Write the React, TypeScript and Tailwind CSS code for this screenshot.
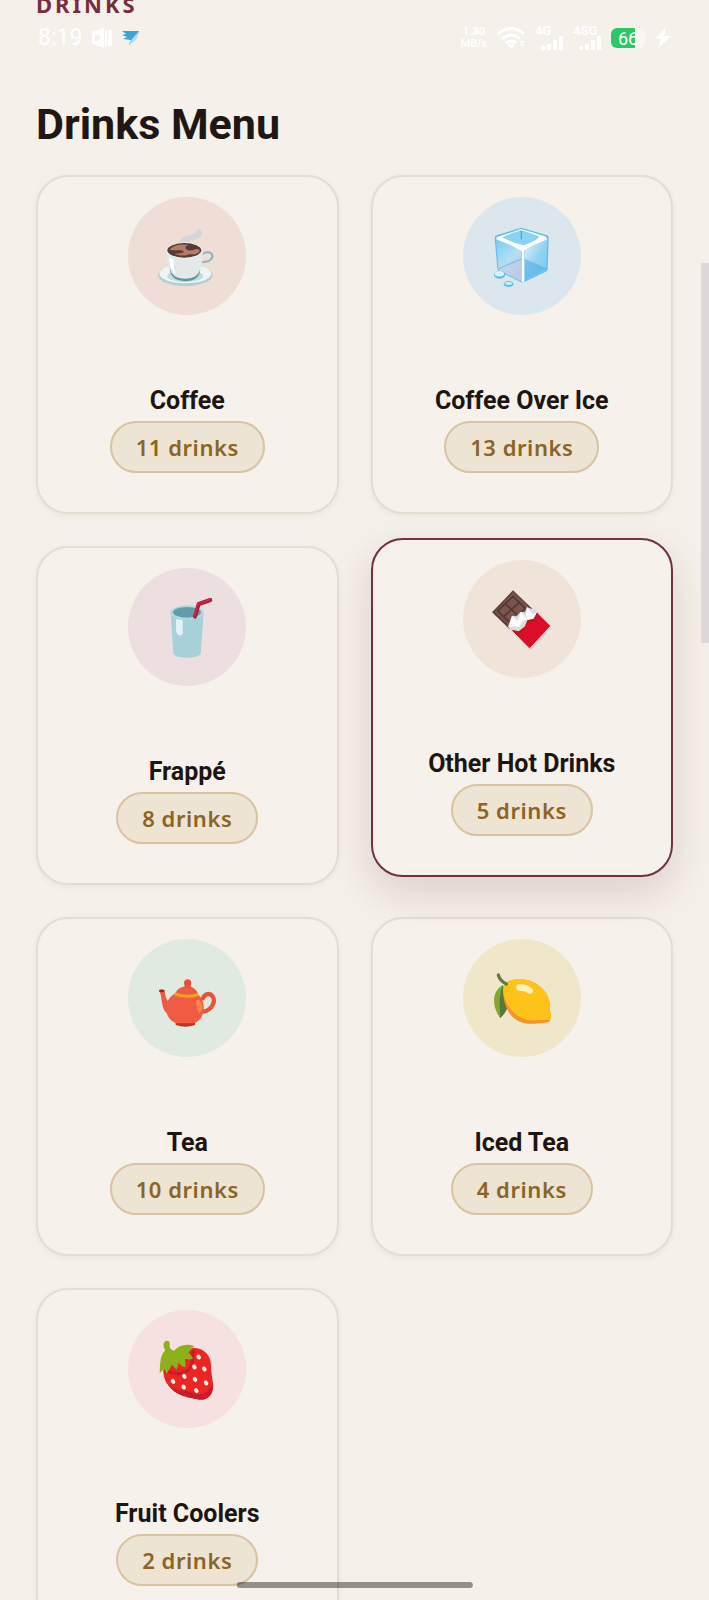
import React from "react";

const CoffeeArt = () => (
  <svg viewBox="0 0 180 180" className="size-15 overflow-visible" aria-hidden="true">
    <path d="M68 52c2-18 16-22 32-25 14-3 20-8 22-21 14 6 18 18 8 27-10 8-24 8-34 13-8 3-12 8-12 14z" fill="#ccd3d7" opacity=".75" />
    <ellipse cx="85" cy="147" rx="82" ry="33" fill="#b3ced5" />
    <ellipse cx="85" cy="143" rx="78" ry="29" fill="#eef5f5" />
    <ellipse cx="85" cy="150" rx="54" ry="18" fill="#c3dce1" />
    <path d="M134 85c14-10 32-8 32 6 0 12-16 18-34 17" fill="none" stroke="#8db4bf" strokeWidth="6" />
    <path d="M29 72c0 34 4 57 20 76 13 16 55 16 70 0 16-19 18-42 19-76z" fill="#e4e9e7" />
    <path d="M38 126c3 10 6 16 12 22 14 14 55 14 69 0 5-5 9-12 11-20-1 13-4 20-11 27-14 14-56 14-70-1-7-7-10-16-11-28z" fill="#5f9799" />
    <path d="M36 93c7 5 10 6 14 8 0 20 2 33 7 43-14-10-19-25-21-51z" fill="#fff" />
    <ellipse cx="83" cy="74" rx="55" ry="25" fill="#e9efee" />
    <ellipse cx="82" cy="73" rx="51" ry="22" fill="#573b36" />
    <path d="M38 72c10-16 38-20 58-14-14 0-13 12-2 15 14 3 20-7 30-3 7 3 4 9-3 12-11 7-20 0-29 4-12 5-27 2-40-2 10-3 28-1 28-7 0-7-20-3-42-5z" fill="#b37e65" />
  </svg>
);

const IceArt = () => (
  <svg viewBox="0 0 180 180" className="size-15 overflow-visible" aria-hidden="true">
    <defs>
      <linearGradient id="iceLeft" x1="0" y1="0" x2="0.6" y2="1">
        <stop offset="0" stopColor="#7bcdf0" />
        <stop offset=".6" stopColor="#b4dff3" />
        <stop offset="1" stopColor="#b9c9e8" />
      </linearGradient>
      <linearGradient id="iceRight" x1="0" y1="0" x2="1" y2="1">
        <stop offset="0" stopColor="#e3f5fc" />
        <stop offset=".5" stopColor="#93d3f1" />
        <stop offset="1" stopColor="#74c5eb" />
      </linearGradient>
    </defs>
    <path d="M88 5 165 28q6 2 5 9l-3 93q0 5-6 7l-66 32q-4 2-9-1L20 135q-4-2-4-8L8 36q0-6 6-8z" fill="#5dbfe6" />
    <path d="M12 38 88 72v94L22 133q-3-2-3-6z" fill="url(#iceLeft)" />
    <path d="M98 72l68-34-3 91q0 4-4 6l-61 29z" fill="url(#iceRight)" />
    <path d="m18 122 70-30v74l-66-33z" fill="#c3cbe6" opacity=".45" />
    <path d="m98 102 65 27-65 35z" fill="#5ab5e2" opacity=".7" />
    <path d="M88 9 164 32 94 69 13 34z" fill="#fff" />
    <path d="M88 13q38 11 54 19-10 13-47 26Q53 47 31 34q28-14 57-21z" fill="#8ad3f2" />
    <path d="M88 14v26" fill="none" stroke="#46aadb" strokeWidth="4" />
    <path d="M14 36q45 17 78 36 28-18 72-35M93 72v96" fill="none" stroke="#fff" strokeWidth="8" strokeLinejoin="round" />
    <path d="m21 128 67-29m10 1 64 29" stroke="#4fadd6" strokeWidth="2" />
    <ellipse cx="23" cy="146" rx="17" ry="12" fill="#64bce2" />
    <ellipse cx="22" cy="143" rx="14" ry="8" fill="#d7f2fd" />
    <ellipse cx="50" cy="174" rx="15" ry="9" fill="#64bce2" />
    <ellipse cx="50" cy="172" rx="11" ry="5" fill="#c4eafc" />
  </svg>
);

const CupArt = () => (
  <svg viewBox="0 0 180 180" className="size-15 overflow-visible" aria-hidden="true">
    <path d="M41 47 49 169c3 18 79 18 82 0l9-122z" fill="#a6d1d8" />
    <ellipse cx="90" cy="47" rx="50" ry="22" fill="#aed9df" />
    <ellipse cx="90" cy="46" rx="42" ry="16" fill="#619ca8" />
    <path d="m114 59 11-38 35-12" fill="none" stroke="#b3183a" strokeWidth="12" strokeLinecap="round" strokeLinejoin="round" />
    <path d="m112 57 10-36 37-13" fill="none" stroke="#ce2b4a" strokeWidth="4" strokeLinecap="round" strokeLinejoin="round" />
    <path d="M57 67q10-1 20 3v39q-2 10-14 4-6-3-6-13z" fill="#e2f3f7" />
  </svg>
);

const ChocolateArt = () => (
  <svg viewBox="0 0 180 180" className="size-15 overflow-visible" aria-hidden="true">
    <path d="m63 4 58 55-68 62L0 70z" fill="#5d4038" />
    <path d="m64 9 50 49-61 52L8 69z" fill="#79564b" />
    <path d="m63 22 37 36-47 42-36-34zM40 44l37 35M82 40 35 83" fill="none" stroke="#503730" strokeWidth="5" />
    <path d="m48 112 12-32 13 2 13-14 13 2 5-16 14 5 8-3 14 16 2 22-40 38-40 2z" fill="#d9dde1" />
    <path d="m60 81 17 14 10-27 14 18 4-31 16 19 14-1-18 22-22-1-14 20-17-2-14 4z" fill="#fafafa" />
    <path d="m61 124 20 3 17-14 8-19 19-4 10-19 40 40-61 66z" fill="#dc0d28" />
    <path d="m61 124 20 3 17-14-2 12-17 13zM106 94l19-4 10-19 4 4-11 22-20 5z" fill="#b71c1c" />
    <path d="m114 178 61-66 3 5-61 66z" fill="#cfd1d5" />
    <path d="m61 124 53 54" stroke="#a91424" strokeWidth="3" />
  </svg>
);

const TeapotArt = () => (
  <svg viewBox="0 0 180 180" className="size-15 overflow-visible" aria-hidden="true">
    <path d="M138 91c5-14 20-18 29-6 10 15-2 41-28 46" fill="none" stroke="#e9533c" strokeWidth="13" strokeLinecap="round" />
    <path d="M5 67q9-7 18 0c1 22 8 32 18 40l1 33C8 137 19 82 5 67z" fill="#ec5a42" />
    <ellipse cx="14" cy="69" rx="8" ry="4" fill="#8f2b24" />
    <path d="M56 158h58v13q-29 10-58 0z" fill="#bd3426" />
    <path d="M55 76c-22 12-30 33-26 56 2 17 18 32 31 34h48c20-4 31-21 32-46 1-24-12-39-28-47z" fill="#ef5c43" />
    <path d="M56 76c2-13 19-20 25-20h21c11 4 19 12 21 23-19 9-48 10-67-3z" fill="#ec5a42" />
    <path d="M55 73q33 14 67 2l5 8q-38 14-77-2z" fill="#f9a11b" />
    <path d="M82 59c2-5-1-10-1-14 0-15 22-15 22 0 0 5-4 10-1 15z" fill="#e84e38" />
    <path d="M117 105c0-15 10-12 17 0 7 15-2 29-10 30-3-13-6-19-7-30z" fill="#ff844c" />
  </svg>
);

const LemonArt = () => (
  <svg viewBox="0 0 180 180" className="size-15 overflow-visible" aria-hidden="true">
    <path d="M32 52C1 69-3 111 24 150c26-24 31-60 8-98z" fill="#82a82c" />
    <path d="M33 52c21 30 25 71-9 98 2-28-8-54 9-98z" fill="#54793c" />
    <path d="M35 55c5-14 20-19 42-21 32-2 60 10 80 34 16 20 17 40 17 60 4 12 5 24-3 34-14 5-28 3-44 5-34 4-66-12-80-40-11-23-17-52-12-72z" fill="#f6932a" />
    <path d="M35 55c5-14 20-19 42-21 32-2 60 10 80 34 16 20 17 40 17 60 4 10 4 20 0 28-22-2-40 3-62 0-30-4-50-22-63-42-11-20-19-41-14-59z" fill="#fec319" />
    <path d="M76 50c-8 13 0 18 13 19 19 1 23 16 33 4 9-14-31-31-46-23z" fill="#fff1b8" />
    <path d="M19 21c3 13 10 20 24 27" fill="none" stroke="#5c7b3d" strokeWidth="10" strokeLinecap="round" />
  </svg>
);

const StrawberryArt = () => (
  <svg viewBox="0 0 180 180" className="size-15 overflow-visible" aria-hidden="true">
    <path d="M108 26c35 1 54 24 54 54 0 25 5 38 6 53 2 33-20 53-48 47-27-6-57-11-72-26-23-20-29-40-29-61z" fill="#ec2422" />
    <path d="M25 123c27 45 66 24 94 44 23 4 43-18 49-36 5 40-21 57-48 50-29-7-69-8-95-58z" fill="#c91b2a" />
    <path d="M111 32c-10 29 4 48-24 66-22 14-38 2-66-2" fill="none" stroke="#c81d26" strokeWidth="9" />
    <path d="M25 34C17 21 19 10 26 6q12-3 12 8c-2 12 4 18 13 21 15-16 36-23 61-14-9 7-13 15-17 20l14 17c-11 6-17 3-25 2l2 24c-10 1-16-6-21-13L59 92 45 77 29 105 22 90 8 102c1-35 3-55 17-68z" fill="#8db01c" />
    <g fill="#fff3e8">
      {[
        [125, 54], [112, 84], [142, 90], [82, 112], [114, 121],
        [147, 132], [48, 127], [80, 144], [118, 155],
      ].map(([x, y]) => (
        <ellipse key={`${x}-${y}`} cx={x} cy={y} rx="6" ry="8" transform={`rotate(-35 ${x} ${y})`} />
      ))}
    </g>
  </svg>
);

interface Category {
  name: string;
  count: number;
  tint: string;
  art: React.ReactNode;
  active?: boolean;
}

const categories: Category[] = [
  { name: "Coffee", count: 11, tint: "bg-[#efded5]", art: <CoffeeArt /> },
  { name: "Coffee Over Ice", count: 13, tint: "bg-[#dce7ed]", art: <IceArt /> },
  { name: "Frappé", count: 8, tint: "bg-[#eddfe0]", art: <CupArt /> },
  { name: "Other Hot Drinks", count: 5, tint: "bg-[#f0e4d9]", art: <ChocolateArt />, active: true },
  { name: "Tea", count: 10, tint: "bg-[#e0eae0]", art: <TeapotArt /> },
  { name: "Iced Tea", count: 4, tint: "bg-[#f0e6c9]", art: <LemonArt /> },
  { name: "Fruit Coolers", count: 2, tint: "bg-[#f5e1df]", art: <StrawberryArt /> },
];

const CategoryCard = ({ category }: { category: Category }) => (
  <a
    href={`#${category.name.toLowerCase().replace(/ /g, "-")}`}
    className={`flex flex-col items-center rounded-4xl border-2 bg-[#f6f1ea] pt-5 pb-[39px] ${
      category.active
        ? "-translate-y-2 border-[#73303f] shadow-[0_16px_40px_rgba(70,35,25,0.15)]"
        : "border-[#e5dcd2] shadow-[0_2px_6px_rgba(70,35,25,0.05)]"
    }`}
  >
    <div className={`flex size-[118px] items-center justify-center rounded-full ${category.tint}`}>
      {category.art}
    </div>
    <h2 className="mt-[66px] text-[25px] leading-10 font-bold text-[#1d1512]">{category.name}</h2>
    <span className="rounded-full border-2 border-[#d9c3a0] bg-[#ede4d3] px-6 py-2 font-['Noto_Sans'] text-[22px] leading-8 font-semibold tracking-wide text-[#8a6525]">
      {category.count} drinks
    </span>
  </a>
);

const SignalBars = ({ label }: { label: string }) => (
  <div className="flex w-7 flex-col text-[13px] leading-[10px] font-bold">
    <span>{label}</span>
    <svg viewBox="0 0 22 14" className="h-3.5 w-[22px] self-end" fill="currentColor" aria-hidden="true">
      <path d="M0 10h4v4H0zM6 8h4v6H6zM12 4h4v10h-4zM18 0h4v14h-4z" />
    </svg>
  </div>
);

const StatusBar = () => (
  <div className="absolute inset-x-0 top-6 flex h-7 items-center justify-between pr-[38px] pl-[38px] text-white">
    <div className="flex items-center">
      <span className="text-[23px] leading-7">8:19</span>
      <svg viewBox="0 0 20 20" className="ml-2.5 size-5" fill="currentColor" aria-hidden="true">
        <path fillRule="evenodd" d="M0 4 12 0v20L0 16zM3 7v6h3v-2h2V7zM13 2h2v16h-2zM16 2h3q1 0 1 1v14q0 1-1 1h-3z" />
      </svg>
      <svg viewBox="0 0 18 16" className="ml-2.5 h-4 w-[18px]" aria-hidden="true">
        <path d="M0 1h17L14 9 7 15l2-5-8-1 4-2-5-2 4-1z" fill="#3aa3dc" />
        <path d="m17 1-3 8-7 6 3-6z" fill="#a9def5" />
      </svg>
    </div>
    <div className="flex items-center gap-2.5">
      <div className="flex flex-col text-center text-[11px] leading-3 font-bold">
        <span>1.30</span>
        <span>MB/s</span>
      </div>
      <svg viewBox="0 0 28 22" className="h-[22px] w-7" fill="none" stroke="currentColor" strokeWidth="3" aria-hidden="true">
        <path d="M1 7q13-11 26 0M5 12q9-8 18 0M9 16q5-4 10 0" />
        <path d="m14 22-4-4q4-3 8 0zM25 13l3 3h-5zM25 20l3-3h-5z" fill="currentColor" stroke="none" />
      </svg>
      <SignalBars label="4G" />
      <SignalBars label="4SG" />
      <div className="flex h-5 w-[34px] items-center justify-center overflow-hidden rounded-md bg-linear-to-r from-[#2bc866] from-70% to-[#faf6f1] to-70% text-[18px]">
        66
      </div>
      <svg viewBox="0 0 16 22" className="h-[22px] w-4" fill="currentColor" aria-hidden="true">
        <path d="M11 0 0 12h6L3 22l13-13H9z" />
      </svg>
    </div>
  </div>
);

export default function App() {
  return (
    <div className="relative h-screen overflow-hidden bg-[#f5f0e9] font-[Roboto,sans-serif]">
      <main className="px-9">
        <p className="-mt-3 font-['Noto_Sans'] text-[22px] leading-8 font-bold tracking-[3px] text-[#762d40]">
          DRINKS
        </p>
        <h1 className="mt-[74px] mb-[21px] text-[43px] leading-15 font-bold text-[#211712]">Drinks Menu</h1>
        <div className="grid grid-cols-2 gap-8">
          {categories.map((category) => (
            <CategoryCard key={category.name} category={category} />
          ))}
        </div>
      </main>
      <StatusBar />
      <div className="absolute top-[263px] right-0 h-[380px] w-2 bg-[#dfd8da]" />
      <div className="absolute bottom-3 left-1/2 h-1.5 w-1/3 -translate-x-1/2 rounded-full bg-black/40" />
    </div>
  );
}
